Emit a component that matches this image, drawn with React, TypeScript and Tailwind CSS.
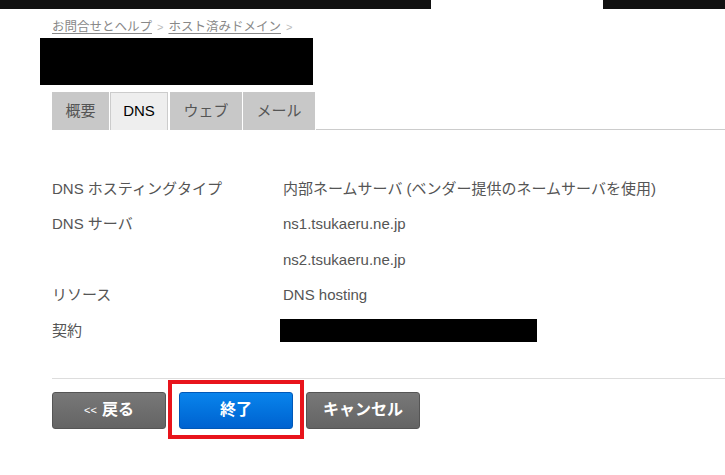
import React from 'react';

const App = () => {
  const tabs = [
    { label: '概要', width: 'w-[57px]', active: false },
    { label: 'DNS', width: 'w-[58px]', active: true },
    { label: 'ウェブ', width: 'w-[72px]', active: false },
    { label: 'メール', width: 'w-[72px]', active: false },
  ];

  const rows = [
    { label: 'DNS ホスティングタイプ', value: '内部ネームサーバ (ベンダー提供のネームサーバを使用)' },
    { label: 'DNS サーバ', value: 'ns1.tsukaeru.ne.jp' },
    { label: '', value: 'ns2.tsukaeru.ne.jp' },
    { label: 'リソース', value: 'DNS hosting' },
    { label: '契約', value: null },
  ];

  return (
    <div className="w-[725px] h-[475px] bg-white overflow-hidden font-['Liberation_Sans','Noto_Sans_CJK_JP',sans-serif]">
      {/* top strip */}
      <div className="flex h-[9px]">
        <div className="w-[431px] bg-[#111]" />
        <div className="flex-1" />
        <div className="w-[122px] bg-[#111]" />
      </div>

      {/* breadcrumb */}
      <div className="pl-[52px] pt-[10px] h-[29px] text-[12.5px] leading-[16px] text-[#888] flex items-start gap-[5px]">
        <span className="underline underline-offset-2">お問合せとヘルプ</span>
        <span className="text-[#bbb] text-[11px]">&gt;</span>
        <span className="underline underline-offset-2">ホスト済みドメイン</span>
        <span className="text-[#bbb] text-[11px]">&gt;</span>
      </div>

      {/* domain name (redacted) */}
      <div className="ml-[40px] w-[273px] h-[47px] bg-black" />

      {/* tabs */}
      <div className="flex mt-[7px] pl-[52px] items-end">
        {tabs.map((tab, i) => (
          <div
            key={i}
            className={
              tab.active
                ? `${tab.width} h-[38px] mr-[2px] bg-[#eee] border border-b-0 border-[#ccc] flex items-center justify-center text-[15px] text-black`
                : `${tab.width} h-[38px] mr-[1px] bg-[#c8c8c8] flex items-center justify-center text-[15px] text-[#555]`
            }
          >
            {tab.label}
          </div>
        ))}
        <div className="flex-1 h-[38px] border-b border-[#ccc]" />
      </div>

      {/* details */}
      <div className="mt-[41px] pl-[52px]">
        {rows.map((row, i) => (
          <div key={i} className="flex items-center h-[35.5px] text-[15px] text-[#555]">
            <div className="w-[231px]">{row.label}</div>
            {row.value ? (
              <div>{row.value}</div>
            ) : (
              <div className="ml-[-3px] w-[257px] h-[23px] bg-black" />
            )}
          </div>
        ))}
      </div>

      {/* footer */}
      <div className="ml-[52px] mt-[29px] border-t border-[#ddd]" />
      <div className="flex gap-[13px] pl-[52px] mt-[13px]">
        <button className="w-[114px] h-[37px] rounded-[3px] border border-[#555] bg-gradient-to-b from-[#787878] to-[#646464] text-white font-semibold flex items-center justify-center gap-[5px]">
          <span className="text-[11px] font-normal">&lt;&lt;</span>
          <span className="text-[16px]">戻る</span>
        </button>
        <div className="relative">
          <button className="w-[114px] h-[37px] rounded-[3px] border border-[#0058b8] bg-gradient-to-b from-[#0a84ec] to-[#0062d0] text-white text-[16px] font-semibold flex items-center justify-center">
            終了
          </button>
          <span className="absolute left-[-11px] right-[-11px] top-[-12px] bottom-[-10px] border-[4px] border-[#e8141c] pointer-events-none" />
        </div>
        <button className="w-[114px] h-[37px] rounded-[3px] border border-[#555] bg-gradient-to-b from-[#787878] to-[#646464] text-white text-[16px] font-semibold flex items-center justify-center">
          キャンセル
        </button>
      </div>
    </div>
  );
};

export default App;
